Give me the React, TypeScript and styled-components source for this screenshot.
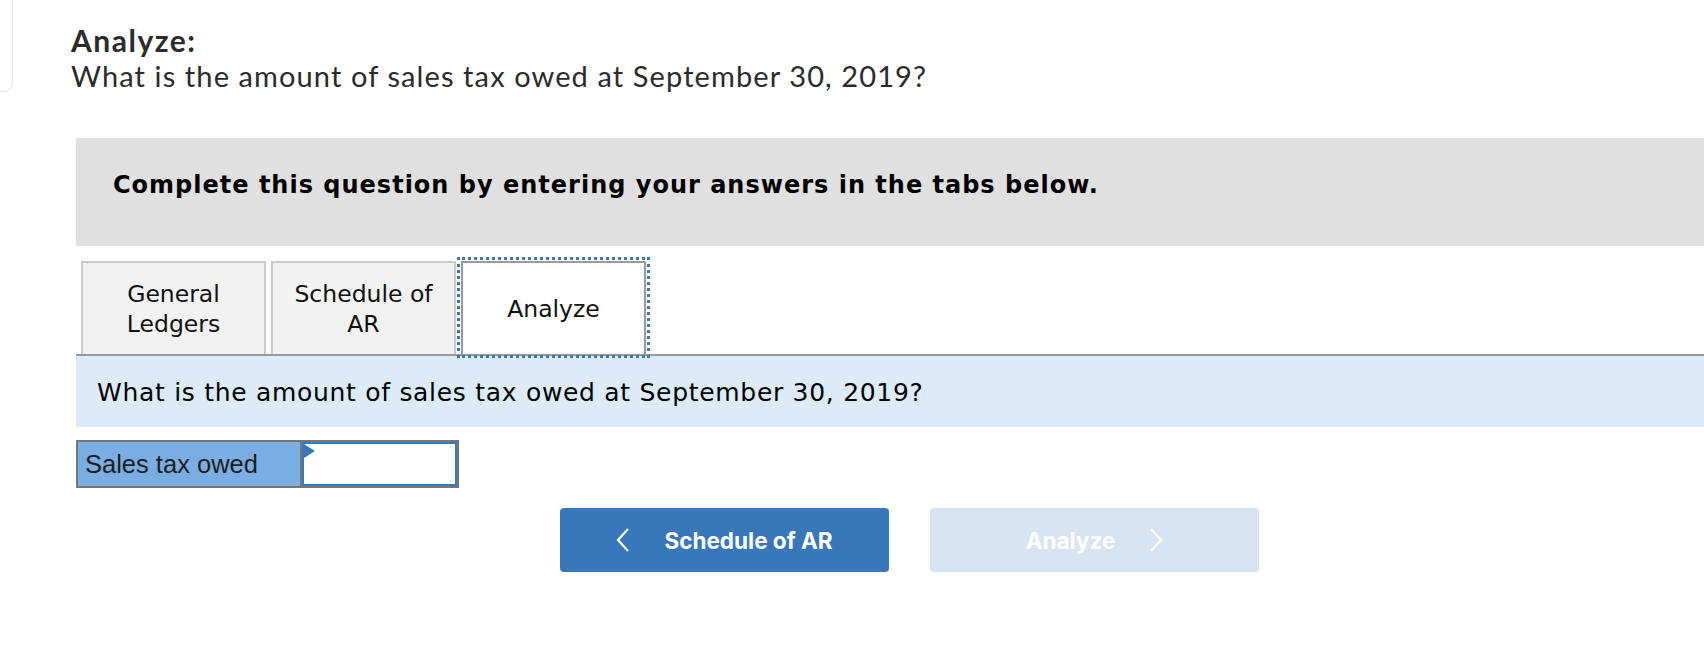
import React from 'react';
import styled, { createGlobalStyle } from 'styled-components';

const GlobalStyle = createGlobalStyle`
  body {
    margin: 0;
    background: #ffffff;
    font-family: 'DejaVu Sans', Verdana, sans-serif;
  }
`;

const Page = styled.div`
  width: 1704px;
  min-height: 656px;
  overflow: hidden;
`;

// TOP PROMPT
const TopRow = styled.div`
  display: flex;
  align-items: flex-start;
`;

const CardEdge = styled.div`
  width: 12px;
  height: 91px;
  flex-shrink: 0;
  border-right: 1px solid #e4e4e4;
  border-bottom: 1px solid #e4e4e4;
  border-bottom-right-radius: 9px;
`;

const Prompt = styled.div`
  margin-left: 58px;
  padding-top: 22px;
  font-family: Lato, 'Open Sans', sans-serif;
  font-size: 29px;
  line-height: 36px;
  letter-spacing: 1.1px;
  color: #2b2b2b;
`;

const PromptTitle = styled.div`
  font-weight: 700;
  font-size: 30px;
  letter-spacing: 1.5px;
`;

// MAIN
const Main = styled.div`
  padding-left: 76px;
  margin-top: 44px;
`;

const Instructions = styled.div`
  height: 108px;
  box-sizing: border-box;
  background: #e0e0e0;
  padding: 29px 0 0 37px;
  font-family: 'DejaVu Sans', Verdana, sans-serif;
  font-weight: 700;
  font-size: 24px;
  letter-spacing: 1px;
  line-height: 36px;
  color: #000;
`;

const TabBar = styled.div`
  display: flex;
  align-items: flex-end;
  gap: 5px;
  height: 100px;
  box-sizing: border-box;
  margin-top: 10px;
  padding-left: 5px;
  border-bottom: 2px solid #999999;
`;

const Tab = styled.div<{ $active?: boolean }>`
  width: 185px;
  height: 93px;
  box-sizing: border-box;
  display: flex;
  align-items: center;
  justify-content: center;
  text-align: center;
  border: 2px solid ${(p) => (p.$active ? '#9a9a9a' : '#cacaca')};
  border-bottom: none;
  background: ${(p) => (p.$active ? '#ffffff' : '#f2f2f2')};
  outline: ${(p) => (p.$active ? '3px dotted #3a78c0' : 'none')};
  outline-offset: 1px;
  font-size: 23.5px;
  line-height: 30px;
  color: #111;
`;

const QuestionPanel = styled.div`
  height: 71px;
  box-sizing: border-box;
  background: #dcebf7;
  padding: 21px 0 0 21px;
  font-size: 25px;
  letter-spacing: 0.7px;
  line-height: 32px;
  color: #000;
`;

const AnswerRow = styled.div`
  display: flex;
  margin-top: 13px;
  width: 383px;
  height: 48px;
  box-sizing: border-box;
  border: 2px solid #767676;
`;

const AnswerLabel = styled.div`
  width: 224px;
  box-sizing: border-box;
  background: #7aaee2;
  border-right: 2px solid #767676;
  padding-left: 7px;
  display: flex;
  align-items: center;
  font-family: 'Liberation Sans', Arial, sans-serif;
  font-size: 25.5px;
  color: #1d1d1d;
`;

const AnswerCell = styled.div`
  position: relative;
  flex: 1;
  border: 2px solid #3877b9;
  background: #fff;
`;

const Flag = styled.div`
  position: absolute;
  left: 0;
  top: 0;
  width: 0;
  height: 0;
  border-top: 7px solid transparent;
  border-bottom: 7px solid transparent;
  border-left: 11px solid #3877b9;
`;

const ButtonRow = styled.div`
  display: flex;
  gap: 41px;
  margin-top: 20px;
  padding-left: 484px;
`;

const NavButton = styled.div<{ $disabled?: boolean }>`
  width: 329px;
  height: 64px;
  border-radius: 4px;
  display: flex;
  align-items: center;
  justify-content: center;
  gap: 34px;
  background: ${(p) => (p.$disabled ? '#d8e4f1' : '#3877b9')};
  color: #fff;
  font-family: Inter, Roboto, sans-serif;
  font-weight: 700;
  font-size: 22.5px;
`;

const Chevron = ({ dir }: { dir: 'left' | 'right' }) => (
  <svg width="14" height="24" viewBox="0 0 14 24">
    <polyline
      points={dir === 'left' ? '12,1 2,12 12,23' : '2,1 12,12 2,23'}
      fill="none"
      stroke="#ffffff"
      strokeWidth="2.2"
    />
  </svg>
);

const App = () => {
  return (
    <Page>
      <GlobalStyle />
      <TopRow>
        <CardEdge />
        <Prompt>
          <PromptTitle>Analyze:</PromptTitle>
          <div>What is the amount of sales tax owed at September 30, 2019?</div>
        </Prompt>
      </TopRow>

      <Main>
        <Instructions>
          Complete this question by entering your answers in the tabs below.
        </Instructions>

        <TabBar>
          <Tab>
            General
            <br />
            Ledgers
          </Tab>
          <Tab>
            Schedule of
            <br />
            AR
          </Tab>
          <Tab $active>Analyze</Tab>
        </TabBar>

        <QuestionPanel>
          What is the amount of sales tax owed at September 30, 2019?
        </QuestionPanel>

        <AnswerRow>
          <AnswerLabel>Sales tax owed</AnswerLabel>
          <AnswerCell>
            <Flag />
          </AnswerCell>
        </AnswerRow>

        <ButtonRow>
          <NavButton>
            <Chevron dir="left" />
            <span>Schedule of AR</span>
          </NavButton>
          <NavButton $disabled>
            <span>Analyze</span>
            <Chevron dir="right" />
          </NavButton>
        </ButtonRow>
      </Main>
    </Page>
  );
};

export default App;
